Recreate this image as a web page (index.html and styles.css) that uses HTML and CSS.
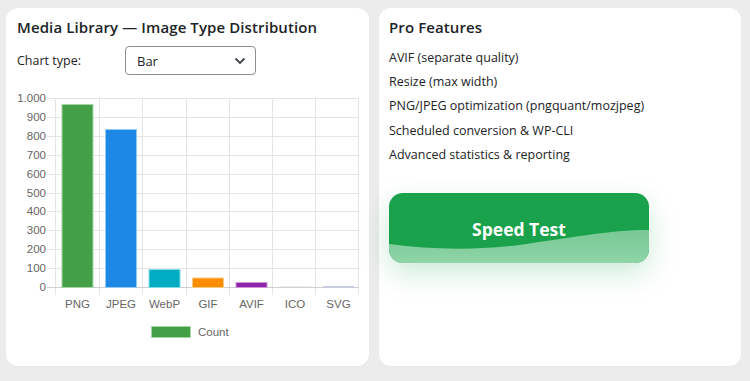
FILE: index.html
```html
<!DOCTYPE html>
<html lang="en">
<head>
  <meta charset="UTF-8" />
  <meta name="viewport" content="width=device-width, initial-scale=1.0"/>
  <title>Image Optimizer - Dashboard</title>
  <link rel="stylesheet" href="styles.css">
</head>
<body>
  <div class="grid">
    <section class="card">
      <h2>Media Library — Image Type Distribution</h2>
      <div class="chart-type">
        <label for="chartType">Chart type:</label>
        <div class="select">
          <span>Bar</span>
          <svg width="14" height="14" viewBox="0 0 14 14"><path d="M2.5 4.5 L7 9 L11.5 4.5" fill="none" stroke="#3c434a" stroke-width="1.8"/></svg>
        </div>
      </div>
      <svg class="chart" width="352" height="262" viewBox="0 0 352 262">
        <g class="grid-lines" stroke="#e5e5e5" stroke-width="1">
          <line x1="30" x2="342" y1="12.5" y2="12.5"/>
          <line x1="30" x2="342" y1="31.5" y2="31.5"/>
          <line x1="30" x2="342" y1="50.5" y2="50.5"/>
          <line x1="30" x2="342" y1="69.5" y2="69.5"/>
          <line x1="30" x2="342" y1="88.5" y2="88.5"/>
          <line x1="30" x2="342" y1="107.5" y2="107.5"/>
          <line x1="30" x2="342" y1="125.5" y2="125.5"/>
          <line x1="30" x2="342" y1="144.5" y2="144.5"/>
          <line x1="30" x2="342" y1="163.5" y2="163.5"/>
          <line x1="30" x2="342" y1="182.5" y2="182.5"/>
          <line x1="38.5" x2="38.5" y1="12" y2="209"/>
          <line x1="82.5" x2="82.5" y1="12" y2="209"/>
          <line x1="125.5" x2="125.5" y1="12" y2="209"/>
          <line x1="169.5" x2="169.5" y1="12" y2="209"/>
          <line x1="212.5" x2="212.5" y1="12" y2="209"/>
          <line x1="255.5" x2="255.5" y1="12" y2="209"/>
          <line x1="298.5" x2="298.5" y1="12" y2="209"/>
          <line x1="341.5" x2="341.5" y1="12" y2="209"/>
        </g>
        <line x1="30" x2="342" y1="201.5" y2="201.5" stroke="#cfcfcf"/>
        <g class="y-labels" text-anchor="end">
          <text x="29" y="16">1.000</text>
          <text x="29" y="35">900</text>
          <text x="29" y="54">800</text>
          <text x="29" y="73">700</text>
          <text x="29" y="92">600</text>
          <text x="29" y="111">500</text>
          <text x="29" y="129">400</text>
          <text x="29" y="148">300</text>
          <text x="29" y="167">200</text>
          <text x="29" y="186">100</text>
          <text x="29" y="205">0</text>
        </g>
        <g class="bars" stroke-width="1">
          <rect x="45" y="18.5" width="31" height="183" fill="#43a047" stroke="#a5d6a7"/>
          <rect x="88.5" y="43.5" width="31" height="158" fill="#1e88e5" stroke="#90caf9"/>
          <rect x="132" y="183.5" width="31" height="18" fill="#00acc1" stroke="#80deea"/>
          <rect x="175.5" y="192" width="31" height="9.5" fill="#fb8c00" stroke="#ffcc80"/>
          <rect x="219" y="196.5" width="31" height="5" fill="#8e24aa" stroke="#ce93d8"/>
          <rect x="262.5" y="200.5" width="31" height="1" fill="#d7d7d7"/>
          <rect x="306" y="200" width="31" height="1.5" fill="#c5cae9"/>
        </g>
        <g class="x-labels" text-anchor="middle">
          <text x="60.5" y="222">PNG</text>
          <text x="104" y="222">JPEG</text>
          <text x="147.5" y="222">WebP</text>
          <text x="191" y="222">GIF</text>
          <text x="234.5" y="222">AVIF</text>
          <text x="278" y="222">ICO</text>
          <text x="321.5" y="222">SVG</text>
        </g>
        <rect x="134.5" y="240.5" width="39" height="11" fill="#43a047" stroke="#a5d6a7"/>
        <text class="legend" x="181" y="250">Count</text>
      </svg>
    </section>

    <section class="card card-side">
      <h2>Pro Features</h2>
      <ul class="features">
        <li>AVIF (separate quality)</li>
        <li>Resize (max width)</li>
        <li>PNG/JPEG optimization (pngquant/mozjpeg)</li>
        <li>Scheduled conversion &amp; WP-CLI</li>
        <li>Advanced statistics &amp; reporting</li>
      </ul>
      <a href="#" class="speed-btn">
        <svg class="wave" width="260" height="70" viewBox="0 0 260 70" preserveAspectRatio="none">
          <defs>
            <linearGradient id="waveFill" x1="0" y1="0" x2="0" y2="1">
              <stop offset="0" stop-color="#78c995"/>
              <stop offset="1" stop-color="#8fd4a8"/>
            </linearGradient>
          </defs>
          <path d="M0 51 C 40 56, 80 58, 130 52 C 180 45, 220 37, 260 37 L260 70 L0 70 Z" fill="url(#waveFill)"/>
        </svg>
        <span>Speed Test</span>
      </a>
    </section>
  </div>
</body>
</html>
```

FILE: styles.css
```css
body {
  margin: 0;
  font-family: "Open Sans", "Noto Sans", sans-serif;
  background: #ececec;
  color: #1d2327;
}

.grid {
  display: grid;
  grid-template-columns: 363px 362px;
  gap: 10px;
  padding: 8px 6px;
}

.card {
  background: #ffffff;
  border-radius: 12px;
  padding: 9px 11px 0;
  height: 349px;
  box-shadow: 0 1px 2px rgba(0, 0, 0, 0.03);
}

.card-side {
  padding-left: 10px;
}

.card h2 {
  margin: 0 0 8px;
  font-size: 15px;
  font-weight: 600;
  line-height: 21px;
  letter-spacing: 0.1px;
}

.chart-type {
  display: flex;
  align-items: center;
  font-size: 12.5px;
}

.chart-type label {
  width: 108px;
}

.select {
  box-sizing: border-box;
  width: 131px;
  height: 29px;
  border: 1px solid #8c8f94;
  border-radius: 4px;
  display: flex;
  align-items: center;
  justify-content: space-between;
  padding: 0 8px 0 11px;
  font-size: 13px;
}

.chart {
  display: block;
  margin-top: 11px;
  font-family: "Liberation Sans", Arial, sans-serif;
  font-size: 11.5px;
}

.chart text {
  fill: #666666;
}

.features {
  list-style: none;
  margin: 1px 0 0;
  padding: 0;
  font-size: 12.5px;
}

.features li {
  line-height: 24.2px;
}

.speed-btn {
  position: relative;
  display: flex;
  align-items: center;
  justify-content: center;
  width: 260px;
  height: 70px;
  margin-top: 26px;
  border-radius: 14px;
  background: #19a24b;
  overflow: hidden;
  text-decoration: none;
  color: #ffffff;
  box-shadow: 0 10px 28px rgba(25, 162, 75, 0.22);
}

.speed-btn .wave {
  position: absolute;
  left: 0;
  top: 0;
}

.speed-btn span {
  position: relative;
  font-size: 17.5px;
  font-weight: 700;
  margin-top: 1px;
}
```
